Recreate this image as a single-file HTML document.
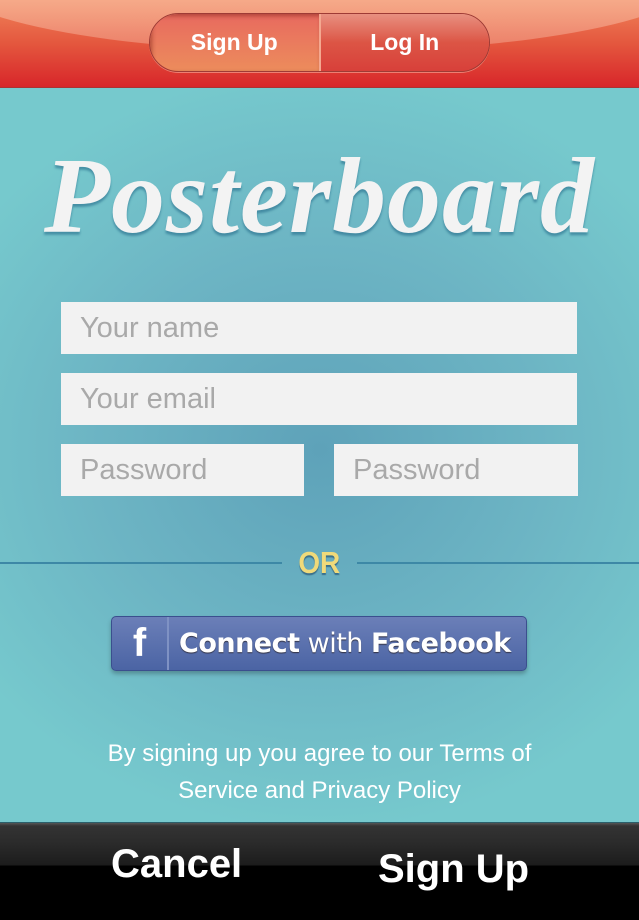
<!DOCTYPE html>
<html><head><style>
*{margin:0;padding:0;box-sizing:border-box}
body{width:639px;height:920px;overflow:hidden;position:relative;font-family:"Liberation Sans",Arial,sans-serif;
background:radial-gradient(ellipse 420px 380px at 320px 450px,#5ea2b9 0%,#6db5c4 55%,#76c9cd 100%);}
.hdr{position:absolute;left:0;top:0;width:639px;height:88px;background:linear-gradient(#f0845a,#e4573e 50%,#d8262a);border-bottom:1px solid #a33;overflow:hidden}
.gloss{position:absolute;left:-60px;top:-100px;width:760px;height:152px;border-radius:50%;background:linear-gradient(rgba(255,230,210,.6),rgba(255,220,200,.3));}
.seg{position:absolute;left:149px;top:13px;width:341px;height:59px;border-radius:30px;border:1px solid #9e3b35;overflow:hidden;display:flex;box-shadow:0 1px 0 rgba(255,200,180,.5)}
.seg div{flex:1;color:#fff;font-weight:bold;font-size:23px;display:flex;align-items:center;justify-content:center}
.s1{background:linear-gradient(#e86a5f,#ec8c5c);box-shadow:inset 2px 2px 4px rgba(120,30,20,.5);border-right:2px solid #f4a890}
.s2{background:linear-gradient(#e89080,#dc5545 50%,#d8403a)}
.logo{position:absolute;left:0;width:639px;top:135px;text-align:center;font-family:"Liberation Serif",serif;font-style:italic;font-weight:bold;font-size:108px;color:#f3f3f3;letter-spacing:1px;text-shadow:0 3px 2px rgba(40,110,140,.6)}
.in{position:absolute;background:#f2f2f2;color:#a9a9a9;font-size:29px;padding-left:19px;display:flex;align-items:center}
.line{position:absolute;top:562px;height:2px;background:#3d88a6}
.or{position:absolute;left:296px;top:545px;font-weight:bold;font-size:31px;color:#f0da7a;text-shadow:0 2px 1px #3a6f8a;letter-spacing:0;transform:scaleX(0.9)}
.fb{position:absolute;left:111px;top:616px;width:416px;height:55px;border-radius:5px;border:1px solid #3b4f8e;background:linear-gradient(#6b7fb8,#4b64a4);box-shadow:0 3px 4px rgba(0,0,0,.25);color:#fff;font-size:30px;display:flex;align-items:center}
.fb .f{width:57px;height:100%;border-right:2px solid #7f92c4;display:flex;align-items:center;justify-content:center;font-weight:bold;font-size:40px}
.fb .t{padding-left:10px;font-family:"DejaVu Sans",sans-serif;font-size:27px;letter-spacing:-0.5px;text-shadow:0 1px 1px #334}
.terms{position:absolute;left:0;width:639px;top:735px;text-align:center;color:#fff;font-size:24px;line-height:37px}
.ftr{position:absolute;left:0;top:822px;width:639px;height:98px;background:linear-gradient(#555 0,#333 3px,#2b2b2b 20px,#1c1c1c 42px,#000 43px,#000);border-top:1px solid #2b5f6a}
.ftr span{position:absolute;color:#fff;font-weight:bold;font-size:40px}
</style></head><body>
<div class="hdr"><div class="gloss"></div>
<div class="seg"><div class="s1">Sign Up</div><div class="s2">Log In</div></div></div>
<div class="logo">Posterboard</div>
<div class="in" style="left:61px;top:302px;width:516px;height:52px">Your name</div>
<div class="in" style="left:61px;top:373px;width:516px;height:52px">Your email</div>
<div class="in" style="left:61px;top:444px;width:243px;height:52px">Password</div>
<div class="in" style="left:334px;top:444px;width:244px;height:52px">Password</div>
<div class="line" style="left:0;width:282px"></div>
<div class="line" style="left:357px;width:282px"></div>
<div class="or">OR</div>
<div class="fb"><div class="f">f</div><div class="t"><b>Connect</b> with <b>Facebook</b></div></div>
<div class="terms">By signing up you agree to our Terms of<br>Service and Privacy Policy</div>
<div class="ftr"><span style="left:111px;top:19px">Cancel</span><span style="left:378px;top:24px">Sign Up</span></div>
</body></html>
